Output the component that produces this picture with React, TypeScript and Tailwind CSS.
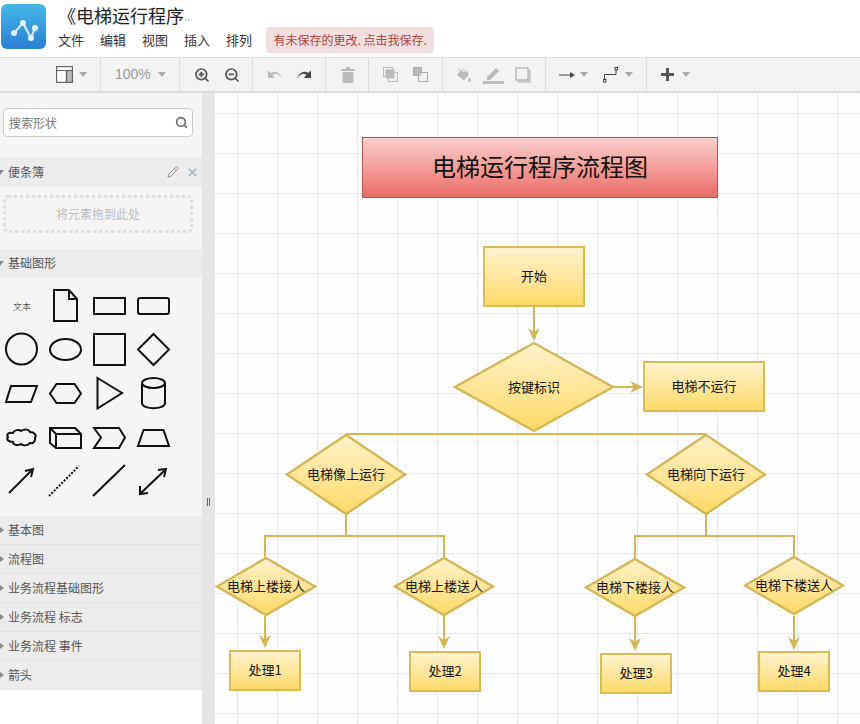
import { Pencil, Search, X, ZoomIn, ZoomOut } from "lucide-react";
import type { ReactNode } from "react";

const MENU = ["文件", "编辑", "视图", "插入", "排列"];
const SECTIONS = ["基本图", "流程图", "业务流程基础图形", "业务流程 标志", "业务流程 事件", "箭头"];
const LINE = "#d3b655";

function Caret({ className = "" }: { className?: string }) {
  return <span className={`block h-0 w-0 border-x-4 border-t-[5px] border-x-transparent border-t-[#aaa] ${className}`} />;
}

function ToolGroup({ className, children }: { className: string; children: ReactNode }) {
  return <div className={`flex h-full shrink-0 items-center border-r border-[#ddd] ${className}`}>{children}</div>;
}

function Toolbar() {
  return (
    <div className="flex h-[36px] shrink-0 border-t border-b-2 border-t-[#ddd] border-b-[#dcdcdc] bg-[#f3f3f3]">
      <ToolGroup className="w-[101px] pl-[56px]">
        <svg width="17" height="17" viewBox="0 0 17 17" fill="none" stroke="#666" strokeWidth="1.2">
          <rect x="0.6" y="0.6" width="15.8" height="15.8" fill="#fff" />
          <rect x="10.5" y="4.5" width="5.9" height="11.9" fill="#bbb" />
          <path d="M0.6 4.5H16.4M10.5 4.5V16.4" />
        </svg>
        <Caret className="ml-[6px]" />
      </ToolGroup>
      <ToolGroup className="w-[79px] pl-[14px]">
        <span className="font-['Liberation_Sans',sans-serif] text-[14px] text-[#999]">100%</span>
        <Caret className="ml-[7px]" />
      </ToolGroup>
      <ToolGroup className="w-[73px] gap-[14px] pl-[14px]">
        <ZoomIn size={16} strokeWidth={2.6} className="text-[#555]" />
        <ZoomOut size={16} strokeWidth={2.6} className="text-[#555]" />
      </ToolGroup>
      <ToolGroup className="w-[73px] gap-[15px] pl-[14px]">
        <svg width="15" height="12" viewBox="0 0 15 12" fill="#bbb">
          <path d="M15 10C13 3 7 1 4 4L1 1.500V9H8L5.500 6C8 3.500 12 5 15 10Z" />
        </svg>
        <svg width="15" height="12" viewBox="0 0 15 12" fill="#444">
          <path d="M0 10C2 3 8 1 11 4L14 1.500V9H7L9.500 6C7 3.500 3 5 0 10Z" />
        </svg>
      </ToolGroup>
      <ToolGroup className="w-[43px] pl-[15px]">
        <svg width="14" height="16" viewBox="0 0 14 16" fill="#bbb">
          <path d="M0 2h5V0h4v2h5v2H0zM1.500 5h11v11h-11z" />
        </svg>
      </ToolGroup>
      <ToolGroup className="w-[74px] gap-[15px] pl-[14px]">
        <svg width="15" height="15" viewBox="0 0 15 15" fill="none" stroke="#bbb">
          <rect x="0.500" y="0.500" width="9" height="9" />
          <rect x="5.500" y="5.500" width="9" height="9" />
          <rect x="3" y="3" width="8" height="8" fill="#bbb" />
        </svg>
        <svg width="15" height="15" viewBox="0 0 15 15" fill="none" stroke="#aaa">
          <rect x="0.500" y="0.500" width="8" height="8" fill="#bbb" />
          <rect x="5.500" y="5.500" width="9" height="9" fill="#f3f3f3" />
          <rect x="5.500" y="5.500" width="3" height="3" fill="#bbb" stroke="none" />
        </svg>
      </ToolGroup>
      <ToolGroup className="w-[103px] gap-[11px] pl-[13px]">
        <svg width="16" height="16" viewBox="0 0 16 16" fill="#bbb">
          <path d="M1 8 3.500 5H12L12.500 8 8 13.500z" />
          <path d="M3.500 5 7 2.500 12 5z" fill="#f3f3f3" stroke="#bbb" strokeWidth="0.8" />
          <path d="M13.500 10.500c1 1.300 1.500 2 1.500 2.700a1.500 1.500 0 0 1-3 0c0-.7.500-1.400 1.500-2.700z" />
          <path d="M2 1l6 6" stroke="#bbb" fill="none" />
        </svg>
        <svg width="21" height="18" viewBox="0 0 21 18" fill="#bbb">
          <path d="M4 11 13 2l3 3-9 9H4zM0 15h21v3H0z" />
        </svg>
        <svg width="16" height="16" viewBox="0 0 16 16" fill="#ccc">
          <path d="M3 3h13v13H3z" />
          <rect x="1" y="1" width="12" height="12" fill="#f3f3f3" stroke="#bbb" strokeWidth="1.500" />
        </svg>
      </ToolGroup>
      <ToolGroup className="w-[101px] pl-[13px]">
        <svg width="16" height="8" viewBox="0 0 16 8" fill="#444">
          <path d="M0 3.500h12v1H0zM11 1l5 3-5 3z" />
        </svg>
        <Caret className="ml-[5px]" />
        <svg className="ml-[15px]" width="16" height="16" viewBox="0 0 16 16" fill="none" stroke="#444">
          <path d="M1.500 13V7.500H13V3" />
          <rect x="0.500" y="12.500" width="2.500" height="2.500" />
          <rect x="12" y="0.500" width="2.500" height="2.500" />
        </svg>
        <Caret className="ml-[6px]" />
      </ToolGroup>
      <div className="flex h-full items-center pl-[14px]">
        <svg width="13" height="13" viewBox="0 0 13 13" fill="#555">
          <path d="M5 0h3v5h5v3H8v5H5V8H0V5h5z" />
        </svg>
        <Caret className="ml-[8px]" />
      </div>
    </div>
  );
}

function Shape({ children }: { children?: ReactNode }) {
  return (
    <svg width="44" height="44" viewBox="0 0 44 44" fill="none" stroke="#111" strokeWidth="2">
      {children}
    </svg>
  );
}

function ShapePalette() {
  return (
    <div className="grid grid-cols-[repeat(4,44px)] grid-rows-[repeat(5,44px)] pt-[7px] pb-[12px]">
      <div className="flex items-center justify-center text-[9px] leading-none font-light text-[#222]">文本</div>
      <Shape><path d="M10 6H25L33 15V37H10Z M25 6V15H33" /></Shape>
      <Shape><rect x="6" y="14" width="31" height="16" /></Shape>
      <Shape><rect x="6" y="14" width="31" height="16" rx="2" /></Shape>

      <Shape><circle cx="21.500" cy="21" r="15.500" /></Shape>
      <Shape><ellipse cx="21.500" cy="21.500" rx="15.500" ry="10.500" /></Shape>
      <Shape><rect x="6" y="6" width="31" height="31" /></Shape>
      <Shape><polygon points="21.500,6 37,21.500 21.500,37 6,21.500" /></Shape>

      <Shape><polygon points="11,14 37,14 31,30 6,30" /></Shape>
      <Shape><polygon points="6,21.500 12.500,12 30.500,12 37,21.500 30.500,31 12.500,31" /></Shape>
      <Shape><polygon points="9.500,6 34,21 9.500,36.500" /></Shape>
      <Shape>
        <path d="M10 11V31C10 38 33 38 33 31V11" />
        <ellipse cx="21.500" cy="11" rx="11.500" ry="5" />
      </Shape>

      <Shape><path d="M13 17c1-3 6-4 8-2 3-2 8-2 9 1 4 0 7 3 5 6 1 3-2 6-5 5-2 3-7 3-9 1-3 2-8 1-8-2-5 0-7-3-5-5-2-3 1-5 5-4z" /></Shape>
      <Shape>
        <path d="M6 12H31L37 18V32H12L6 27Z M6 12L12 18H37 M12 18V32" />
      </Shape>
      <Shape><polygon points="6,12 31,12 37,21.500 31,32 6,32 13,21.500" /></Shape>
      <Shape><polygon points="6,30 11.500,14 31.500,14 37,30" /></Shape>

      <Shape>
        <path d="M9 33 32 10" />
        <path d="M25 11 33 9 31 17" />
      </Shape>
      <Shape><path d="M5 36 35 6" strokeDasharray="2 1.500" /></Shape>
      <Shape><path d="M5 36 37 5" /></Shape>
      <Shape>
        <path d="M9 33 33 10" />
        <path d="M26 10 34 9 32 17 M8 26 8 34 16 33" />
      </Shape>
    </div>
  );
}

function Sidebar() {
  return (
    <aside className="flex w-[202px] shrink-0 flex-col bg-white">
      <div className="bg-[#f5f5f5]">
        <div className="pt-[15px] pr-[9px] pb-[20px] pl-[3px]">
          <div className="flex h-[29px] items-center justify-between rounded-[4px] border border-[#ccc] bg-white pr-[4px] pl-[5px] text-[12px] text-[#777]">
            搜索形状
            <Search size={13} strokeWidth={3} className="text-[#666]" />
          </div>
        </div>
        <SectionHead className="h-[30px]" open>
          <Pencil size={12} className="ml-auto text-[#888]" />
          <X size={13} strokeWidth={3} className="mr-[1px] ml-[7px] text-[#9fb6cc]" />
        </SectionHead>
        <div className="pt-[8px] pr-[9px] pb-[16px] pl-[3px]">
          <div className="flex h-[38px] items-center justify-center rounded-[5px] border-[3px] border-dotted border-[#ddd] text-[12px] text-[#bbb]">
            将元素拖到此处
          </div>
        </div>
        <SectionHead className="h-[28px]" open title="基础图形" />
        <ShapePalette />
      </div>
      {SECTIONS.map((name) => (
        <SectionHead key={name} className="h-[29px] border-b border-[#e2e2e2]" title={name} />
      ))}
    </aside>
  );
}

function SectionHead({
  className,
  title = "便条簿",
  open = false,
  children,
}: {
  className: string;
  title?: string;
  open?: boolean;
  children?: ReactNode;
}) {
  return (
    <div className={`flex shrink-0 items-center bg-[#ececec] pr-[2px] text-[12px] text-[#555] ${className}`}>
      {open ? (
        <span className="ml-[-4px] block h-0 w-0 border-x-[4px] border-t-[5px] border-x-transparent border-t-[#888]" />
      ) : (
        <span className="block h-0 w-0 border-y-[3px] border-l-[4px] border-y-transparent border-l-[#888]" />
      )}
      <span className={`whitespace-pre ${open ? "ml-[4px]" : "ml-[4px]"}`}>{title}</span>
      {children}
    </div>
  );
}

function RectNode({ className, children }: { className: string; children: ReactNode }) {
  return (
    <div
      className={`absolute flex items-center justify-center border-2 border-[#d9bb55] bg-linear-to-b from-[#fff2cc] to-[#ffd966] pb-[2px] text-[13px] text-[#111] ${className}`}
    >
      {children}
    </div>
  );
}

function Diamond({ className, children }: { className: string; children: ReactNode }) {
  return (
    <div className={`absolute flex items-center justify-center pb-[1px] text-[13px] text-[#111] ${className}`}>
      <svg className="absolute inset-0 h-full w-full overflow-visible" viewBox="0 0 100 100" preserveAspectRatio="none">
        <polygon
          points="50,0 100,50 50,100 0,50"
          fill="url(#nodeFill)"
          stroke={LINE}
          strokeWidth="2.4"
          vectorEffect="non-scaling-stroke"
        />
      </svg>
      <span className="relative whitespace-nowrap">{children}</span>
    </div>
  );
}

function ArrowDown({ x, y1, y2 }: { x: number; y1: number; y2: number }) {
  return (
    <>
      <path d={`M${x} ${y1}V${y2 - 6}`} />
      <polygon stroke="none" fill={LINE} points={`${x},${y2} ${x - 6},${y2 - 13} ${x},${y2 - 9} ${x + 6},${y2 - 13}`} />
    </>
  );
}

// coordinates of the connectors are page pixels, the viewBox starts where the canvas starts
function Connectors() {
  return (
    <svg
      className="absolute inset-0"
      width="645"
      height="631"
      viewBox="215 93 645 631"
      fill="none"
      stroke={LINE}
      strokeWidth="2"
    >
      <defs>
        <linearGradient id="nodeFill" x1="0" y1="0" x2="0" y2="1">
          <stop offset="0" stopColor="#fff2cc" />
          <stop offset="1" stopColor="#ffd966" />
        </linearGradient>
      </defs>
      <ArrowDown x={534} y1={306} y2={341} />
      <path d="M613 387H636" />
      <polygon stroke="none" fill={LINE} points="643,387 630,381 634,387 630,393" />
      <path d="M346 434H706" />
      <path d="M346 514V536M265 557V536H444V557" />
      <path d="M706 514V536M635 558V536H794V556" />
      <ArrowDown x={265} y1={616} y2={648} />
      <ArrowDown x={444} y1={616} y2={649} />
      <ArrowDown x={635} y1={617} y2={651} />
      <ArrowDown x={794} y1={616} y2={650} />
    </svg>
  );
}

function Canvas() {
  return (
    <main className="relative flex-1 overflow-hidden bg-white bg-[image:linear-gradient(#e6e6e6_1px,transparent_1px),linear-gradient(90deg,#e6e6e6_1px,transparent_1px),linear-gradient(#f9f9f9_1px,transparent_1px),linear-gradient(90deg,#f9f9f9_1px,transparent_1px)] bg-[size:40px_40px,40px_40px,8px_8px,8px_8px] bg-[position:22px_20px,22px_20px,6px_4px,6px_4px]">
      <Connectors />
      <div className="absolute top-[44px] left-[147px] flex h-[61px] w-[356px] items-center justify-center border border-[#b85450] bg-linear-to-b from-[#f8cecc] to-[#ea6b66] pb-[4px] text-[24px] text-[#111]">
        电梯运行程序流程图
      </div>
      <RectNode className="top-[153px] left-[268px] h-[61px] w-[102px]">开始</RectNode>
      <RectNode className="top-[268px] left-[428px] h-[51px] w-[122px]">电梯不运行</RectNode>
      <RectNode className="top-[557px] left-[14px] h-[41px] w-[72px]">处理1</RectNode>
      <RectNode className="top-[558px] left-[194px] h-[41px] w-[72px]">处理2</RectNode>
      <RectNode className="top-[560px] left-[385px] h-[41px] w-[72px]">处理3</RectNode>
      <RectNode className="top-[558px] left-[543px] h-[41px] w-[72px]">处理4</RectNode>
      <Diamond className="top-[250px] left-[240px] h-[88px] w-[158px]">按键标识</Diamond>
      <Diamond className="top-[342px] left-[72px] h-[79px] w-[118px]">电梯像上运行</Diamond>
      <Diamond className="top-[342px] left-[432px] h-[79px] w-[118px]">电梯向下运行</Diamond>
      <Diamond className="top-[465px] left-[2px] h-[57px] w-[98px]">电梯上楼接人</Diamond>
      <Diamond className="top-[465px] left-[180px] h-[57px] w-[98px]">电梯上楼送人</Diamond>
      <Diamond className="top-[466px] left-[371px] h-[57px] w-[98px]">电梯下楼接人</Diamond>
      <Diamond className="top-[464px] left-[530px] h-[57px] w-[98px]">电梯下楼送人</Diamond>
    </main>
  );
}

export default function App() {
  return (
    <div className="flex h-screen w-full flex-col overflow-hidden bg-white font-['Noto_Sans_CJK_SC','Liberation_Sans',sans-serif]">
      <header className="flex h-[57px] shrink-0">
        <div className="mt-[4px] ml-[1px] h-[45px] w-[45px] rounded-[6px] bg-linear-to-b from-[#45b7e6] to-[#2b7ed6]">
          <svg width="45" height="45" viewBox="0 0 45 45" fill="none" stroke="#fff" strokeWidth="2.200">
            <path d="M13 29 22 19 30 34 34 24" stroke="#cfe8f8" />
            <g fill="#e8f4fc" stroke="none">
              <circle cx="13" cy="29" r="3" />
              <circle cx="22" cy="19" r="3" />
              <circle cx="30" cy="34" r="3" />
              <circle cx="34" cy="24" r="3" />
            </g>
          </svg>
        </div>
        <div className="ml-[12px] flex flex-col">
          <div className="mt-[3px] h-[24px] whitespace-nowrap text-[18px] leading-[24px] text-[#222]">
            《电梯运行程序
            <span className="font-['Liberation_Sans',sans-serif] text-[10px] tracking-[-0.5px] text-[#666]">··</span>
          </div>
          <div className="flex items-center">
            <nav className="flex gap-[16px] text-[13px] text-[#333]">
              {MENU.map((item) => (
                <span key={item}>{item}</span>
              ))}
            </nav>
            <div className="ml-[14px] flex h-[26px] w-[168px] items-center justify-center rounded-[4px] bg-[#f2dede] text-[12px] text-[#a94442]">
              有未保存的更改. 点击我保存.
            </div>
          </div>
        </div>
      </header>
      <Toolbar />
      <div className="flex min-h-0 flex-1">
        <Sidebar />
        <div className="flex w-[13px] shrink-0 justify-center gap-px bg-[#e5e5e5] pt-[405px]">
          <span className="h-[8px] w-px bg-[#666]" />
          <span className="h-[8px] w-px bg-[#666]" />
        </div>
        <Canvas />
      </div>
    </div>
  );
}
